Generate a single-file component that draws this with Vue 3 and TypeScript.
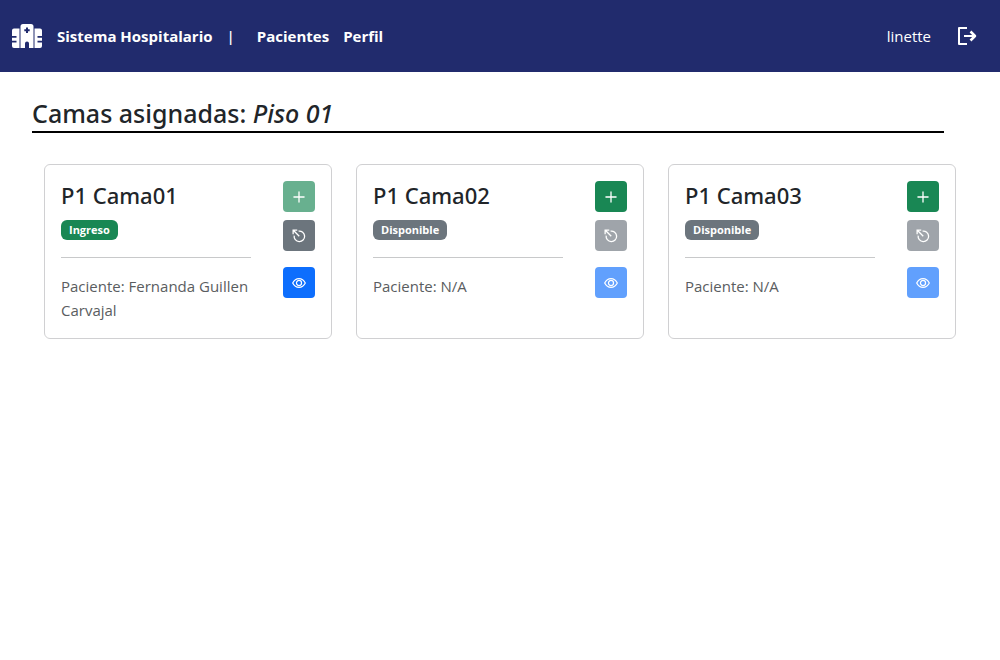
<script setup lang="ts">
interface Bed {
  id: number
  name: string
  status: 'Ingreso' | 'Disponible'
  patient: string | null
}

const user = 'linette'
const floor = 'Piso 01'
const beds: Bed[] = [
  { id: 1, name: 'P1 Cama01', status: 'Ingreso', patient: 'Fernanda Guillen Carvajal' },
  { id: 2, name: 'P1 Cama02', status: 'Disponible', patient: null },
  { id: 3, name: 'P1 Cama03', status: 'Disponible', patient: null },
]
</script>

<template>
  <header class="navbar">
    <a class="logo" href="#" aria-label="Inicio">
      <svg viewBox="0 0 30 24" width="30" height="24" fill="currentColor" aria-hidden="true">
        <path
          fill-rule="evenodd"
          d="M11 0h8a2.500 2.500 0 0 1 2.500 2.500V24H17v-4.500a2 2 0 0 0-4 0V24H8.500V2.500A2.500 2.500 0 0 1 11 0zM14 3.500v1.700h-1.700v2H14v1.700h2V7.200h1.700v-2H16V3.500z"
        />
        <path d="M2 4.500h5.500V24H2a2 2 0 0 1-2-2v-3.500h4.500v-1.800H0v-3h4.500v-1.800H0V6.500a2 2 0 0 1 2-2z" />
        <path d="M28 4.500h-5.500V24H28a2 2 0 0 0 2-2v-3.500h-4.500v-1.800H30v-3h-4.500v-1.800H30V6.500a2 2 0 0 0-2-2z" />
      </svg>
    </a>
    <a class="brand" href="#">Sistema Hospitalario</a>
    <span class="divider">|</span>
    <nav class="links">
      <a href="#">Pacientes</a>
      <a href="#">Perfil</a>
    </nav>
    <span class="user">{{ user }}</span>
    <button class="logout" type="button" aria-label="Cerrar sesión">
      <svg viewBox="0 0 20 20" width="20" height="20" fill="none" stroke="currentColor" stroke-width="2" stroke-linejoin="round" aria-hidden="true">
        <path d="M10 2H2v16h8M7 10h11" />
        <path d="M13.500 5.500 18 10l-4.500 4.500" stroke-width="2.500" />
      </svg>
    </button>
  </header>

  <main class="content">
    <h1 class="title">Camas asignadas: <em>{{ floor }}</em></h1>
    <section class="beds">
      <article v-for="bed in beds" :key="bed.id" class="card">
        <div class="info">
          <h2>{{ bed.name }}</h2>
          <span class="badge" :class="{ occupied: bed.patient }">{{ bed.status }}</span>
          <hr />
          <p>Paciente: {{ bed.patient ?? 'N/A' }}</p>
        </div>
        <div class="actions">
          <button class="btn add" type="button" aria-label="Ingresar paciente" :disabled="bed.patient !== null">
            <svg viewBox="0 0 16 16" width="14" height="14" fill="none" stroke="currentColor" stroke-width="1.500" stroke-linecap="round" aria-hidden="true">
              <path d="M8 2.200v11.600M2.200 8h11.600" />
            </svg>
          </button>
          <button class="btn release" type="button" aria-label="Liberar cama" :disabled="bed.patient === null">
            <svg viewBox="0 0 16 16" width="14" height="14" fill="none" stroke="currentColor" stroke-width="1.500" aria-hidden="true">
              <path d="M7.500 2.500A6 6 0 1 1 2.500 7.500M8.300 8.300 1.800 1.800M1.300 6V1.300H6" />
            </svg>
          </button>
          <button class="btn view" type="button" aria-label="Ver paciente" :disabled="bed.patient === null">
            <svg viewBox="0 0 16 16" width="14" height="14" fill="none" stroke="currentColor" stroke-width="1.400" stroke-linejoin="round" aria-hidden="true">
              <path d="M.8 8S3.300 3 8 3s7.200 5 7.200 5-2.500 5-7.200 5S.8 8 .8 8z" />
              <circle cx="8" cy="8" r="2.900" />
            </svg>
          </button>
        </div>
      </article>
    </section>
  </main>
</template>

<style>
body {
  margin: 0;
  background: #fff;
}
</style>

<style scoped>
.navbar,
.content {
  font-family: 'Open Sans', 'Noto Sans', sans-serif;
  box-sizing: border-box;
}

.navbar {
  display: flex;
  align-items: center;
  height: 72px;
  padding: 0 23px 0 12px;
  background: #212b6d;
  color: #fff;
  font-size: 15px;
  line-height: 24px;
}

.navbar a {
  color: inherit;
  font-weight: 700;
  text-decoration: none;
}

.logo {
  display: flex;
  margin-right: 15px;
}

.divider {
  margin: 0 22px 0 14px;
  font-weight: 600;
}

.links {
  display: flex;
  gap: 14px;
}

.user {
  margin-left: auto;
}

.logout {
  display: flex;
  margin-left: 26px;
  padding: 0;
  border: 0;
  background: none;
  color: inherit;
}

.content {
  padding: 24px 44px;
  color: #212529;
}

.title {
  margin: 0 12px 31px -12px;
  border-bottom: 2px solid #000;
  font-family: 'Noto Sans', 'Open Sans', sans-serif;
  font-size: 25px;
  font-weight: 500;
  line-height: 35px;
}

.beds {
  display: grid;
  grid-template-columns: repeat(3, 1fr);
  gap: 24px;
}

.card {
  display: flex;
  justify-content: space-between;
  gap: 32px;
  padding: 16px;
  border: 1px solid #d0d0d2;
  border-radius: 6px;
}

.info {
  flex: 1;
}

h2 {
  margin: 0 0 10px;
  font-family: 'Noto Sans', 'Open Sans', sans-serif;
  font-size: 22px;
  font-weight: 500;
  line-height: 29px;
}

.badge {
  display: block;
  width: fit-content;
  padding: 4px 8px;
  border-radius: 6px;
  background: #6c757d;
  color: #fff;
  font-size: 11px;
  font-weight: 700;
  line-height: 12px;
}

.badge.occupied {
  background: #198754;
}

hr {
  margin: 17px 0 16px;
  border: 0;
  border-top: 1px solid #c8c9ca;
}

p {
  margin: 0;
  color: #5a5d60;
  font-size: 15px;
  line-height: 24px;
}

.actions {
  display: flex;
  flex-direction: column;
  gap: 8px;
}

.btn {
  display: flex;
  align-items: center;
  justify-content: center;
  width: 32px;
  height: 31px;
  padding: 0;
  border: 0;
  border-radius: 4px;
  color: #fff;
}

.btn:disabled {
  opacity: 0.65;
}

.add {
  background: #198754;
}

.release {
  background: #6c757d;
}

.view {
  margin-top: 8px;
  background: #0d6efd;
}
</style>
